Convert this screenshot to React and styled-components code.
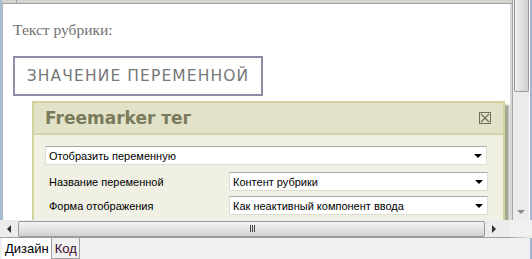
import React from "react";
import styled, { createGlobalStyle } from "styled-components";

const GlobalStyle = createGlobalStyle`
    html, body {
        margin: 0;
        padding: 0;
        background: #f0f0f0;
    }
`;

const Frame = styled.div`
    width: 532px;
    height: 259px;
    display: grid;
    grid-template-rows: 220px 18px 21px;
    background: #f0f0f0;
    overflow: hidden;
    font-family: "DejaVu Sans", sans-serif;
`;

const TopRow = styled.div`
    display: flex;
    min-height: 0;
    border-right: 2px solid #9fb6d3;
`;

const Editor = styled.div`
    flex: 1;
    display: flex;
    flex-direction: column;
    border-left: 2px solid #a9bdd6;
    border-right: 1px solid #a6a6a6;
    min-width: 0;
`;

const Ruler = styled.div`
    height: 3px;
    background: #d6d3ce;
    border-bottom: 1px solid #a0a0a0;
    display: flex;
    span {
        width: 14px;
        border-right: 1px solid #a0a0a0;
    }
`;

const Canvas = styled.div`
    flex: 1;
    background: #fff;
    border-left: 1px solid #b5b5b5;
    border-right: 2px solid #d8d8d8;
    padding: 17px 0 0 10px;
    overflow: hidden;
`;

const Caption = styled.p`
    margin: 0;
    font-family: "Liberation Serif", serif;
    font-size: 15.5px;
    line-height: 18px;
    color: #707070;
`;

const VarBox = styled.div`
    margin-top: 17px;
    width: 246px;
    height: 36px;
    border: 2px solid #8f8ba8;
    display: flex;
    align-items: center;
    justify-content: center;
    font-size: 15.5px;
    letter-spacing: 1.1px;
    color: #777;
`;

const Dialog = styled.div`
    margin: 5px 0 0 19px;
    width: 469px;
    border: 2px solid #d2d29e;
    background: #f0f0e4;
    box-shadow: 4px 4px 2px rgba(90, 90, 60, 0.55);
`;

const DialogHead = styled.div`
    height: 30px;
    background: #e2e2c9;
    border-bottom: 2px solid #d4d4a8;
    display: flex;
    align-items: center;
    justify-content: space-between;
    padding: 0 12px 0 11px;
`;

const DialogTitle = styled.h2`
    margin: 0;
    font-family: "DejaVu Sans", sans-serif;
    font-weight: bold;
    font-size: 17px;
    color: #7a7a5c;
`;

const CloseBox = styled.div`
    width: 10px;
    height: 10px;
    border: 1px solid #6f6f55;
    display: flex;
    svg {
        display: block;
    }
`;

const DialogBody = styled.div`
    padding: 11px 12px 20px 11px;
    display: flex;
    flex-direction: column;
    gap: 5px;
    font-family: "Liberation Sans", sans-serif;
    font-size: 11px;
    color: #000;
`;

const FieldRow = styled.div`
    display: grid;
    grid-template-columns: 180px 259px;
    align-items: center;
    padding-left: 4px;
    margin-top: ${(p) => (p.$first ? "2px" : "0")};
`;

const Select = styled.div`
    height: 19px;
    background: #fff;
    border: 1px solid #dcdcd0;
    border-top-color: #a9a9a9;
    display: flex;
    align-items: center;
    justify-content: space-between;
    padding: 0 4px 0 3px;
    width: ${(p) => (p.$wide ? "442px" : "auto")};
    box-sizing: border-box;
`;

const Arrow = styled.span`
    width: 0;
    height: 0;
    border-left: 4px solid transparent;
    border-right: 4px solid transparent;
    border-top: 4px solid #000;
`;

const VScroll = styled.div`
    width: 16px;
    background: #ececec;
    display: flex;
    flex-direction: column;
    justify-content: space-between;
    align-items: center;
    border-right: 1px solid #fff;
`;

const VThumb = styled.div`
    width: 15px;
    height: 92px;
    box-sizing: border-box;
    border: 1px solid #9a9a9a;
    border-radius: 0 0 2px 2px;
    border-top: none;
    background: linear-gradient(to right, #f2f2f2, #dcdcdc 60%, #cfcfcf);
`;

const DownArrow = styled.span`
    margin-bottom: 6px;
    width: 0;
    height: 0;
    border-left: 4px solid transparent;
    border-right: 4px solid transparent;
    border-top: 4px solid #8a8a8a;
`;

const HScroll = styled.div`
    display: flex;
    align-items: center;
    background: #ececec;
    border-bottom: 1px solid #a0a0a0;
    border-right: 22px solid #f0f0f0;
`;

const HArrow = styled.span`
    width: 18px;
    display: flex;
    justify-content: center;
    &::before {
        content: "";
        border-top: 4px solid transparent;
        border-bottom: 4px solid transparent;
        ${(p) => (p.$right ? "border-left: 4px solid #303030;" : "border-right: 4px solid #303030;")}
    }
`;

const HThumb = styled.div`
    width: 467px;
    height: 16px;
    box-sizing: border-box;
    border: 1px solid #999;
    border-radius: 2px;
    background: linear-gradient(#f4f4f4, #e3e3e3 50%, #d0d0d0);
    display: flex;
    align-items: center;
    justify-content: center;
`;

const Grip = styled.span`
    display: flex;
    gap: 1px;
    margin-left: 1px;
    i {
        width: 1px;
        height: 7px;
        background: #444;
    }
`;

const Tabs = styled.div`
    display: flex;
    align-items: stretch;
    padding-left: 2px;
    border-right: 2px solid #9fb6d3;
    font-family: "Liberation Sans", sans-serif;
    font-size: 13px;
`;

const Tab = styled.div`
    padding: 0 2px 0 3px;
    display: flex;
    align-items: center;
    background: ${(p) => (p.$active ? "#fff" : "transparent")};
    color: ${(p) => (p.$active ? "#000" : "#3a0a28")};
    border-right: 1px solid #a0a0a0;
    border-bottom: ${(p) => (p.$active ? "none" : "1px solid #a0a0a0")};
`;

export default function App() {
    return (
        <>
            <GlobalStyle />
            <Frame>
                <TopRow>
                    <Editor>
                        <Ruler>
                            <span />
                        </Ruler>
                        <Canvas>
                            <Caption>Текст рубрики:</Caption>
                            <VarBox>ЗНАЧЕНИЕ ПЕРЕМЕННОЙ</VarBox>
                            <Dialog>
                                <DialogHead>
                                    <DialogTitle>Freemarker тег</DialogTitle>
                                    <CloseBox>
                                        <svg width="10" height="10" viewBox="0 0 10 10">
                                            <path d="M1 1L9 9M9 1L1 9" stroke="#6f6f55" strokeWidth="1.2" />
                                        </svg>
                                    </CloseBox>
                                </DialogHead>
                                <DialogBody>
                                    <Select $wide>
                                        Отобразить переменную
                                        <Arrow />
                                    </Select>
                                    <FieldRow $first>
                                        <span>Название переменной</span>
                                        <Select>
                                            Контент рубрики
                                            <Arrow />
                                        </Select>
                                    </FieldRow>
                                    <FieldRow>
                                        <span>Форма отображения</span>
                                        <Select>
                                            Как неактивный компонент ввода
                                            <Arrow />
                                        </Select>
                                    </FieldRow>
                                </DialogBody>
                            </Dialog>
                        </Canvas>
                    </Editor>
                    <VScroll>
                        <VThumb />
                        <DownArrow />
                    </VScroll>
                </TopRow>
                <HScroll>
                    <HArrow />
                    <HThumb>
                        <Grip>
                            <i />
                            <i />
                            <i />
                        </Grip>
                    </HThumb>
                    <HArrow $right />
                </HScroll>
                <Tabs>
                    <Tab $active>Дизайн</Tab>
                    <Tab>Код</Tab>
                </Tabs>
            </Frame>
        </>
    );
}
